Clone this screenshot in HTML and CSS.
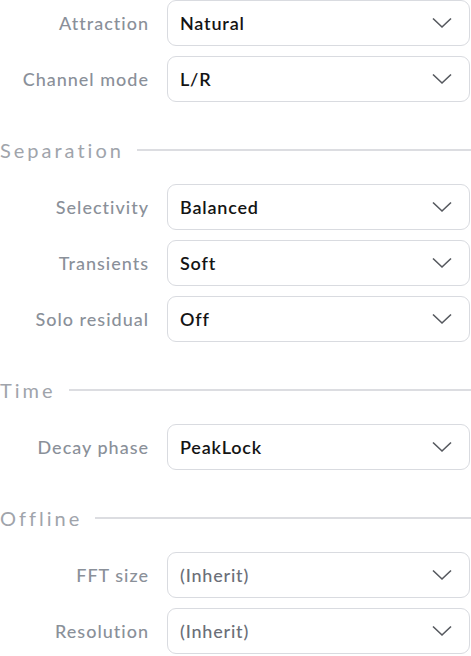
FILE: index.html
```html
<!DOCTYPE html>
<html lang="en">
<head>
    <meta charset="UTF-8">
    <meta name="viewport" content="width=device-width, initial-scale=1.0">
    <title>Settings</title>
    <link rel="stylesheet" href="styles.css">
</head>
<body>
    <div class="panel">
        <div class="row">
            <label class="label">Attraction</label>
            <div class="select"><span>Natural</span><svg class="chev" viewBox="0 0 20 12"><path d="M1 1.5 L10 10 L19 1.5"/></svg></div>
        </div>
        <div class="row">
            <label class="label">Channel mode</label>
            <div class="select"><span>L/R</span><svg class="chev" viewBox="0 0 20 12"><path d="M1 1.5 L10 10 L19 1.5"/></svg></div>
        </div>

        <div class="section"><span>Separation</span></div>
        <div class="row">
            <label class="label">Selectivity</label>
            <div class="select"><span>Balanced</span><svg class="chev" viewBox="0 0 20 12"><path d="M1 1.5 L10 10 L19 1.5"/></svg></div>
        </div>
        <div class="row">
            <label class="label">Transients</label>
            <div class="select"><span>Soft</span><svg class="chev" viewBox="0 0 20 12"><path d="M1 1.5 L10 10 L19 1.5"/></svg></div>
        </div>
        <div class="row">
            <label class="label">Solo residual</label>
            <div class="select"><span>Off</span><svg class="chev" viewBox="0 0 20 12"><path d="M1 1.5 L10 10 L19 1.5"/></svg></div>
        </div>

        <div class="section"><span>Time</span></div>
        <div class="row">
            <label class="label">Decay phase</label>
            <div class="select"><span>PeakLock</span><svg class="chev" viewBox="0 0 20 12"><path d="M1 1.5 L10 10 L19 1.5"/></svg></div>
        </div>

        <div class="section"><span>Offline</span></div>
        <div class="row">
            <label class="label">FFT size</label>
            <div class="select inherit"><span>(Inherit)</span><svg class="chev" viewBox="0 0 20 12"><path d="M1 1.5 L10 10 L19 1.5"/></svg></div>
        </div>
        <div class="row">
            <label class="label">Resolution</label>
            <div class="select inherit"><span>(Inherit)</span><svg class="chev" viewBox="0 0 20 12"><path d="M1 1.5 L10 10 L19 1.5"/></svg></div>
        </div>
    </div>
</body>
</html>
```
FILE: styles.css
```css
body {
    margin: 0;
    padding: 0;
    background-color: #ffffff;
    font-family: Lato, "Noto Sans", sans-serif;
}

.panel {
    width: 471px;
}

.row {
    display: grid;
    grid-template-columns: 148px 1fr;
    column-gap: 19px;
    align-items: center;
    margin-bottom: 10px;
    padding-right: 1px;
}

.label {
    text-align: right;
    font-size: 18px;
    letter-spacing: 1px;
    margin-right: -1px;
    font-weight: 500;
    color: #8a9099;
}

.select {
    height: 46px;
    box-sizing: border-box;
    border: 1.5px solid #d9dbe0;
    border-radius: 9px;
    display: flex;
    align-items: center;
    justify-content: space-between;
    padding: 0 17px 0 12px;
    font-size: 18px;
    letter-spacing: 0.8px;
    font-weight: 600;
    color: #141414;
}

.select.inherit {
    color: #6b6f78;
    font-weight: 500;
}

.chev {
    width: 20px;
    height: 12px;
    fill: none;
    stroke: #55585e;
    stroke-width: 1.6;
}

.section {
    display: flex;
    align-items: center;
    height: 24px;
    margin-top: 36px;
    margin-bottom: 22px;
    font-size: 20px;
    font-weight: 400;
    letter-spacing: 3px;
    color: #a0a4ab;
}

.section::after {
    content: "";
    flex: 1;
    height: 1.5px;
    background-color: #dcdde1;
    margin-left: 13px;
}
```
